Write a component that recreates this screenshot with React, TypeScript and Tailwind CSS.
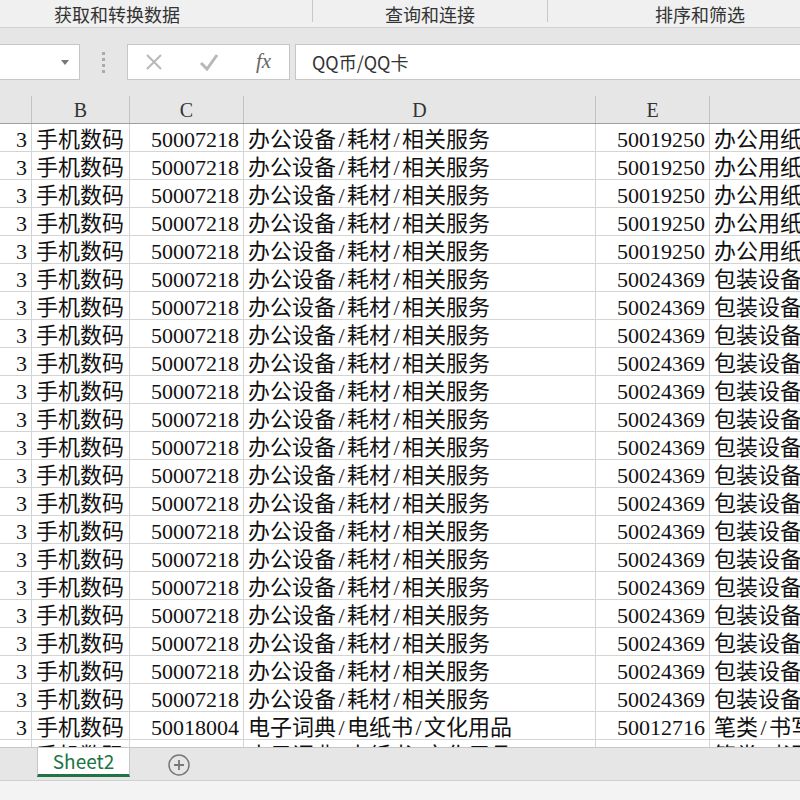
import React from "react";

type Row = { a?: string; b?: string; c?: string; d?: string; e?: string; f?: string };

const cols = [
  { key: "a", label: "", w: "w-[32px]", align: "right" },
  { key: "b", label: "B", w: "w-[98px]", align: "left" },
  { key: "c", label: "C", w: "w-[114px]", align: "right" },
  { key: "d", label: "D", w: "w-[352px]", align: "left" },
  { key: "e", label: "E", w: "w-[114px]", align: "right" },
  { key: "f", label: "", w: "w-[120px]", align: "left" },
] as const;

function buildRows(): Row[] {
  const rows: Row[] = [];
  for (let i = 0; i < 21; i++) {
    rows.push({
      a: "3",
      b: "手机数码",
      c: "50007218",
      d: "办公设备/耗材/相关服务",
      e: i < 5 ? "50019250" : "50024369",
      f: i < 5 ? "办公用纸/本册" : "包装设备/标签",
    });
  }
  rows.push({
    a: "3",
    b: "手机数码",
    c: "50018004",
    d: "电子词典/电纸书/文化用品",
    e: "50012716",
    f: "笔类/书写工具",
  });
  rows.push({ a: "3", b: "手机数码", d: "电子词典/电纸书/文化用品", f: "笔类/书写工具" });
  return rows;
}

// slashes are half-width in the sheet font
function CellText({ text }: { text?: string }) {
  if (!text) return null;
  const parts = text.split("/");
  return (
    <>
      {parts.map((p, i) => (
        <React.Fragment key={i}>
          {i > 0 && <span className="inline-block w-[11px] text-center">/</span>}
          {p}
        </React.Fragment>
      ))}
    </>
  );
}

const cellFont = "font-['Liberation_Serif','Noto_Sans_CJK_SC',serif] text-[22px] text-[#111]";

function App() {
  const rows = buildRows();

  return (
    <div className="w-[800px] h-[800px] overflow-hidden flex flex-col bg-[#e6e6e6] font-['Noto_Sans_CJK_SC',sans-serif]">
      {/* ribbon group labels */}
      <div className="h-[28px] shrink-0 flex bg-[#f0f0f0] border-b border-[#d2d2d2] text-[18px] text-[#333] leading-none">
        <div className="w-[312px] flex items-center pl-[54px]">获取和转换数据</div>
        <div className="w-[1px] h-[22px] bg-[#c8c8c8]" />
        <div className="w-[234px] flex items-center justify-center">查询和连接</div>
        <div className="w-[1px] h-[22px] bg-[#c8c8c8]" />
        <div className="flex-1 flex items-center pl-[107px]">排序和筛选</div>
      </div>

      {/* formula bar */}
      <div className="h-[68px] shrink-0 flex items-center">
        <div className="w-[80px] h-[36px] bg-white border border-l-0 border-[#c6c6c6] flex items-center justify-end pr-[10px]">
          <svg width="8" height="5" viewBox="0 0 8 5">
            <path d="M0 0h8L4 5z" fill="#777" />
          </svg>
        </div>
        <div className="w-[47px] flex flex-col items-center gap-[3px]">
          <span className="w-[3px] h-[3px] bg-[#aaa]" />
          <span className="w-[3px] h-[3px] bg-[#aaa]" />
          <span className="w-[3px] h-[3px] bg-[#aaa]" />
          <span className="w-[3px] h-[3px] bg-[#aaa]" />
        </div>
        <div className="w-[163px] h-[36px] bg-white border border-[#c6c6c6] flex items-center">
          <div className="w-[52px] flex justify-center">
            <svg width="18" height="18" viewBox="0 0 18 18">
              <path d="M2 2L16 16M16 2L2 16" stroke="#b8b8b8" strokeWidth="2" />
            </svg>
          </div>
          <div className="w-[58px] flex justify-center">
            <svg width="20" height="18" viewBox="0 0 20 18">
              <path d="M2 10L8 16L18 2" stroke="#b8b8b8" strokeWidth="3" fill="none" />
            </svg>
          </div>
          <div className="flex-1 flex justify-center font-['Liberation_Serif',serif] italic text-[21px] text-[#666]">
            fx
          </div>
        </div>
        <div className="flex-1 ml-[5px] h-[36px] bg-white border border-r-0 border-[#c6c6c6] flex items-center pl-[16px] text-[18px] text-[#333]">
          QQ币/QQ卡
        </div>
      </div>

      {/* grid */}
      <div className="h-[651px] shrink-0 overflow-hidden bg-white">
        <div className="h-[28px] flex bg-[#e6e6e6] border-b border-[#9f9f9f]">
          {cols.map((c) => (
            <div
              key={c.key}
              className={`${c.w} shrink-0 h-full flex items-center justify-center border-r border-[#c3c3c3] font-['Liberation_Serif',serif] text-[20px] text-[#333]`}
            >
              {c.label}
            </div>
          ))}
        </div>
        {rows.map((r, i) => (
          <div key={i} className="h-[28px] flex border-b border-[#d4d4d4]">
            {cols.map((c) => (
              <div
                key={c.key}
                className={`${c.w} shrink-0 h-full flex items-center pt-[3px] overflow-hidden whitespace-nowrap border-r border-[#d4d4d4] ${cellFont} ${
                  c.align === "right" ? "justify-end pr-[4px]" : "justify-start pl-[4px]"
                }`}
              >
                <span>
                  <CellText text={r[c.key as keyof Row]} />
                </span>
              </div>
            ))}
          </div>
        ))}
      </div>

      {/* sheet tabs */}
      <div className="h-[33px] shrink-0 flex items-start bg-[#e6e6e6] border-t border-[#c6c6c6]">
        <div className="ml-[37px] w-[93px] h-[29px] bg-white border-x border-[#c6c6c6] border-b-[3px] border-b-[#217346] flex items-center justify-center text-[19px] text-[#217346]">
          Sheet2
        </div>
        <div className="ml-[38px] mt-[6px]">
          <svg width="22" height="22" viewBox="0 0 22 22">
            <circle cx="11" cy="11" r="10" fill="none" stroke="#777" strokeWidth="1.5" />
            <path d="M11 6V16M6 11H16" stroke="#777" strokeWidth="1.8" />
          </svg>
        </div>
      </div>

      {/* status bar */}
      <div className="flex-1 bg-[#f3f3f3] border-t border-[#d0d0d0]" />
    </div>
  );
}

export default App;
